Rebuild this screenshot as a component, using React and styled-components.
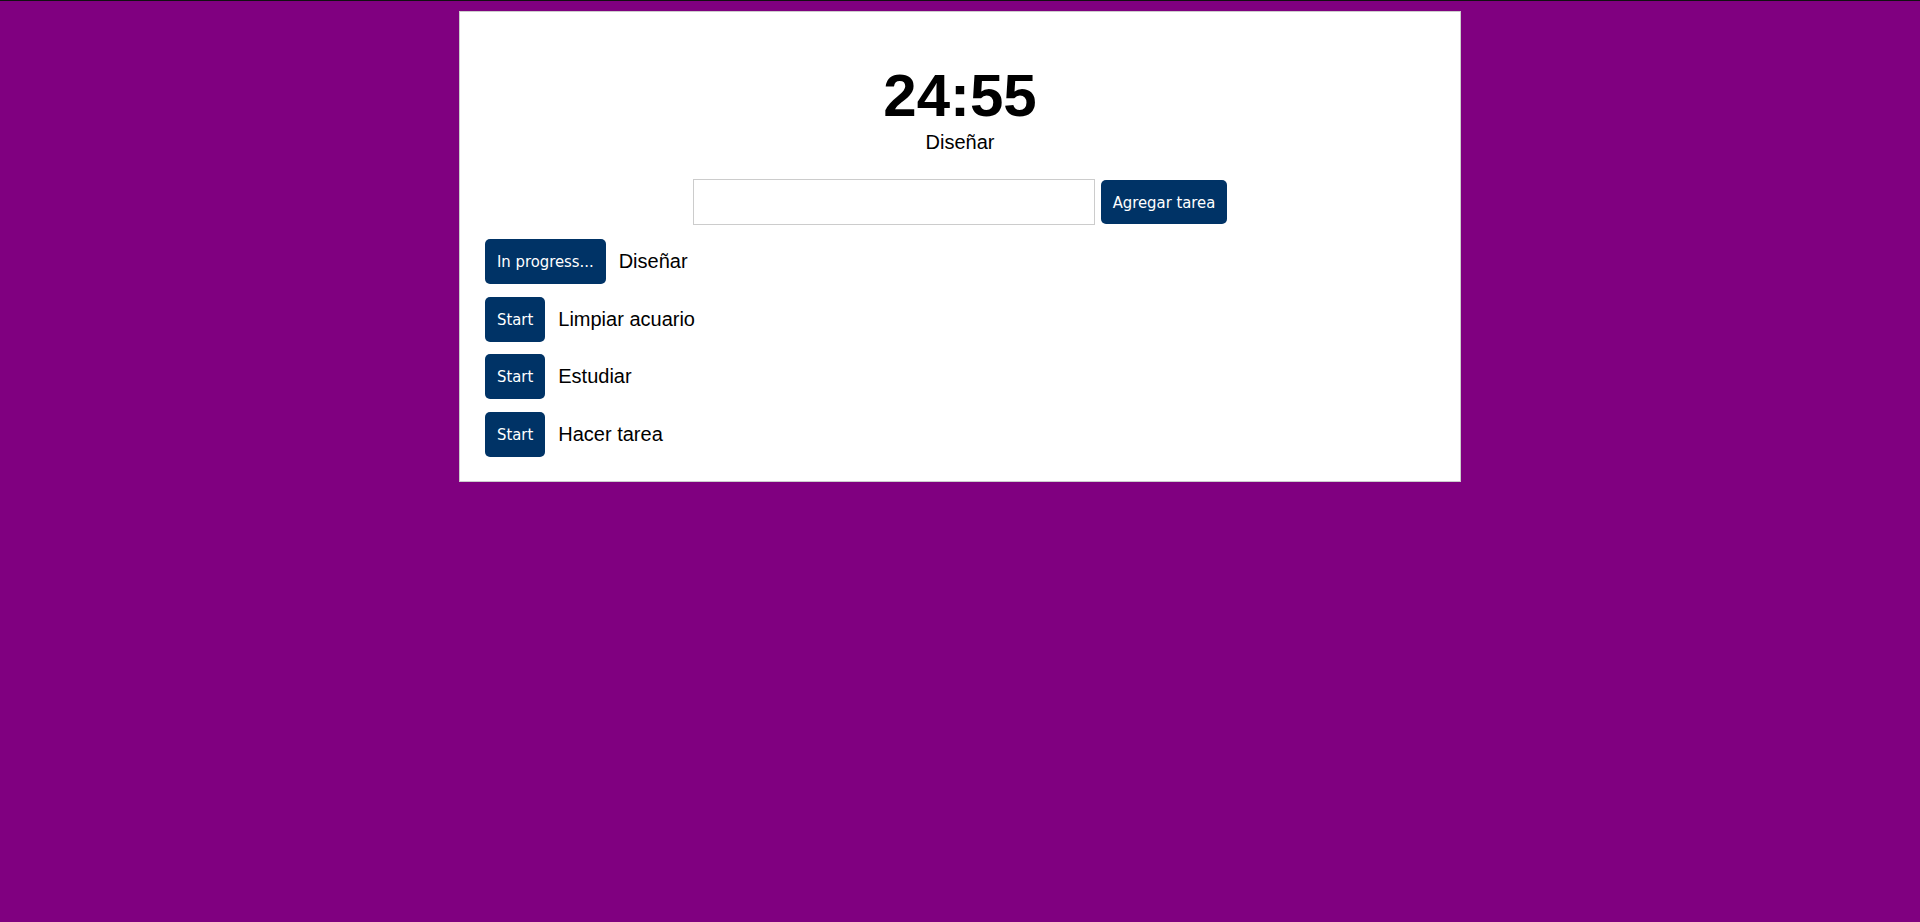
import React from "react";
import styled, { createGlobalStyle } from "styled-components";

const GlobalStyle = createGlobalStyle`
    html, body{
        background-color: #800080;
    }
    body{
        margin: 0;
        border-top: 1px solid #111;
        padding-top: 10px;
        font-family: "Liberation Sans", Arial, sans-serif;
    }
`;

const Panel = styled.div`
    box-sizing: border-box;
    width: 1002px;
    margin: 0 auto;
    background-color: #fff;
    border: 1px solid #ccc;
    padding: 54px 25px 24px 25px;
`;

const Timer = styled.div`
    font-size: 60px;
    font-weight: bold;
    line-height: 1;
    text-align: center;
    color: #000;
`;

const Current = styled.div`
    margin-top: 5px;
    font-size: 20px;
    line-height: 23px;
    text-align: center;
`;

const Form = styled.form`
    margin-top: 25px;
    display: flex;
    justify-content: center;
    align-items: center;
`;

const Input = styled.input`
    box-sizing: border-box;
    width: 402px;
    height: 46px;
    border: 1px solid #ccc;
    padding: 0 8px;
    font-size: 16px;
    outline: none;
`;

const Button = styled.button`
    box-sizing: border-box;
    height: ${({small}) => small ? '44px' : '45px'};
    margin-left: ${({small}) => small ? '6px' : '0'};
    padding: 0 12px;
    background-color: #003366;
    color: #fff;
    border: none;
    border-radius: 5px;
    font-family: "DejaVu Sans", Tahoma, sans-serif;
    font-stretch: condensed;
    font-size: 16.5px;
    cursor: pointer;
`;

const List = styled.div`
    margin-top: 14px;
    display: flex;
    flex-direction: column;
    gap: 12.5px;
`;

const Row = styled.div`
    display: flex;
    align-items: center;
    gap: 13px;
`;

const Label = styled.span`
    font-size: 20px;
    color: #000;
`;

const tasks = [
    {name: "Diseñar", active: true},
    {name: "Limpiar acuario", active: false},
    {name: "Estudiar", active: false},
    {name: "Hacer tarea", active: false},
];

export default function App(){
    return(
        <>
            <GlobalStyle />
            <Panel>
                <Timer>24:55</Timer>
                <Current>Diseñar</Current>
                <Form onSubmit={e => e.preventDefault()}>
                    <Input type="text" />
                    <Button small type="submit">Agregar tarea</Button>
                </Form>
                <List>
                    {tasks.map(t => (
                        <Row key={t.name}>
                            <Button type="button">{t.active ? "In progress..." : "Start"}</Button>
                            <Label>{t.name}</Label>
                        </Row>
                    ))}
                </List>
            </Panel>
        </>
    )
}
